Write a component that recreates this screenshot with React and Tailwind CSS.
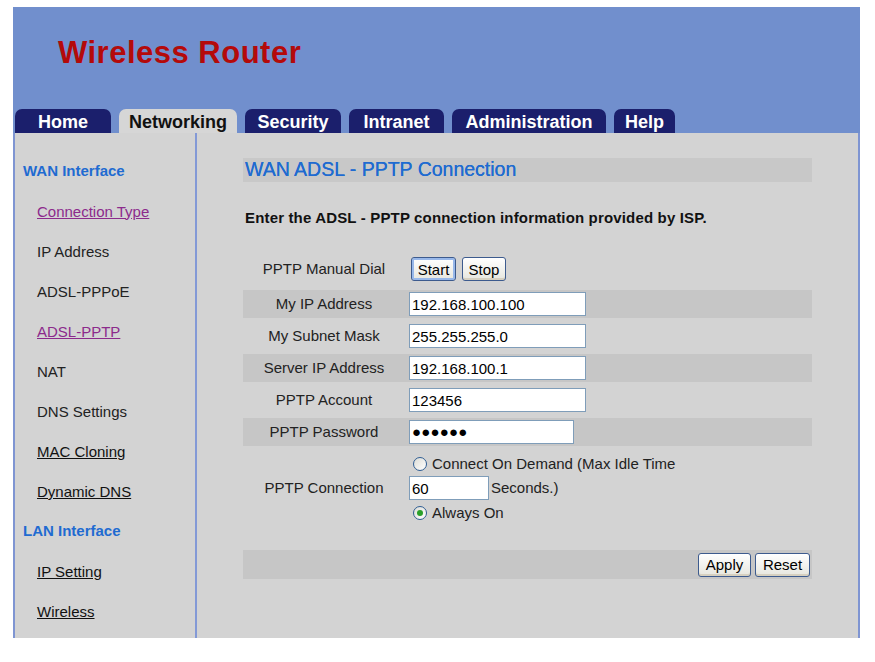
import React from 'react';

const tabs = [
  { label: 'Home', w: 'w-[96px]' },
  { label: 'Networking', w: 'w-[118px]', active: true },
  { label: 'Security', w: 'w-[96px]' },
  { label: 'Intranet', w: 'w-[95px]' },
  { label: 'Administration', w: 'w-[154px]' },
  { label: 'Help', w: 'w-[61px]' },
];

const menu = [
  { label: 'WAN Interface', kind: 'heading' },
  { label: 'Connection Type', kind: 'visited' },
  { label: 'IP Address', kind: 'plain' },
  { label: 'ADSL-PPPoE', kind: 'plain' },
  { label: 'ADSL-PPTP', kind: 'visited' },
  { label: 'NAT', kind: 'plain' },
  { label: 'DNS Settings', kind: 'plain' },
  { label: 'MAC Cloning', kind: 'link' },
  { label: 'Dynamic DNS', kind: 'link' },
  { label: 'LAN Interface', kind: 'heading' },
  { label: 'IP Setting', kind: 'link' },
  { label: 'Wireless', kind: 'link' },
];

function MenuItem({ item }) {
  if (item.kind === 'heading') {
    return <div className="h-[40px] flex items-center pl-[8px] pt-[1px] text-[15px] font-bold text-[#1f6bd1]">{item.label}</div>;
  }
  let cls = 'text-[#222]';
  if (item.kind === 'visited') cls = 'text-[#8c2a8c] underline';
  if (item.kind === 'link') cls = 'text-[#111] underline';
  return (
    <div className="h-[40px] flex items-center pl-[22px] pt-[2px] text-[15px]">
      <a href="#" className={cls}>{item.label}</a>
    </div>
  );
}

function XpButton({ children, focused, w }) {
  return (
    <button
      type="button"
      className={`h-[24px] ${w} rounded-[3px] border border-[#3d5b8e] bg-gradient-to-b from-white to-[#e6e6de] text-[15px] leading-none text-black ${
        focused ? 'shadow-[inset_0_0_0_2px_#98b8ea]' : 'shadow-[inset_0_-2px_0_#d6d0c0]'
      }`}
    >
      {children}
    </button>
  );
}

function Row({ label, dark, children }) {
  return (
    <div className={`flex h-[28px] items-center ${dark ? 'bg-[#c6c6c6]' : ''}`}>
      <div className="w-[162px] text-center text-[15px] text-[#222]">{label}</div>
      <div className="flex flex-1 items-center pl-[4px]">{children}</div>
    </div>
  );
}

function TextBox({ value, w }) {
  return (
    <input
      readOnly
      defaultValue={value}
      className={`h-[24px] ${w} border border-[#7f9db9] bg-white px-[2px] text-[15px] text-black outline-none`}
    />
  );
}

function Radio({ checked }) {
  return (
    <span className="flex h-[14px] w-[14px] items-center justify-center rounded-full border border-[#2f5e93] bg-gradient-to-br from-[#dcdcd6] to-white">
      {checked && <span className="h-[6px] w-[6px] rounded-full bg-[#2aa02a]" />}
    </span>
  );
}

export default function App() {
  return (
    <div className="min-h-screen bg-white pl-[13px] pt-[7px] font-['Liberation_Sans',Arial,sans-serif]">
      <div className="w-[847px]">
        {/* header */}
        <div className="flex h-[126px] flex-col bg-[#718fcd]">
          <h1 className="pl-[45px] pt-[30px] text-[31px] font-bold leading-none tracking-[0.5px] text-[#b40a0a]">Wireless Router</h1>
          <div className="mt-auto flex gap-[8px] pl-[2px]">
            {tabs.map((t) => (
              <div
                key={t.label}
                className={`flex h-[24px] ${t.w} items-center justify-center rounded-t-[7px] pt-[2px] text-[18px] font-bold leading-none ${
                  t.active ? 'bg-[#d6d6d6] text-[#111]' : 'bg-[#1b1f6c] text-white'
                }`}
              >
                {t.label}
              </div>
            ))}
          </div>
        </div>

        {/* body */}
        <div className="flex h-[505px] border-x-2 border-[#7f95d2] bg-[#d3d3d3]">
          <div className="w-[182px] border-r-2 border-[#8399d6] pt-[18px]">
            {menu.map((m) => (
              <MenuItem key={m.label} item={m} />
            ))}
          </div>

          <div className="pl-[46px] pt-[25px]">
            <div className="w-[569px]">
              <div className="flex h-[24px] items-center bg-[#c8c8c8] pl-[2px] text-[19.5px] leading-none text-[#1f6bd1] [text-shadow:0_0_0.5px_#1f6bd1]">
                WAN ADSL - PPTP Connection
              </div>

              <p className="mt-[26px] pl-[2px] text-[15px] font-bold leading-[20px] tracking-[0.16px] text-[#111]">
                Enter the ADSL - PPTP connection information provided by ISP.
              </p>

              <div className="mt-[27px]">
                <Row label="PPTP Manual Dial">
                  <div className="flex gap-[6px] pl-[2px]">
                    <XpButton focused w="w-[45px]">Start</XpButton>
                    <XpButton w="w-[44px]">Stop</XpButton>
                  </div>
                </Row>
              </div>

              <div className="mt-[7px] flex flex-col gap-[4px]">
                <Row label="My IP Address" dark>
                  <TextBox value="192.168.100.100" w="w-[177px]" />
                </Row>
                <Row label="My Subnet Mask">
                  <TextBox value="255.255.255.0" w="w-[177px]" />
                </Row>
                <Row label="Server IP Address" dark>
                  <TextBox value="192.168.100.1" w="w-[177px]" />
                </Row>
                <Row label="PPTP Account">
                  <TextBox value="123456" w="w-[177px]" />
                </Row>
                <Row label="PPTP Password" dark>
                  <div className="flex h-[24px] w-[165px] items-center border border-[#7f9db9] bg-white pl-[2px] text-[15px] tracking-[0.2px] text-black">
                    ●●●●●●
                  </div>
                </Row>

                <div className="flex items-center pt-[2px]">
                  <div className="w-[162px] text-center text-[15px] text-[#222]">PPTP Connection</div>
                  <div className="flex flex-col pl-[4px] text-[15px] text-[#222]">
                    <label className="flex h-[24px] items-center gap-[5px] pl-[4px]">
                      <Radio />
                      Connect On Demand (Max Idle Time
                    </label>
                    <div className="flex items-center gap-[2px]">
                      <TextBox value="60" w="w-[80px]" />
                      <span>Seconds.)</span>
                    </div>
                    <label className="mt-[1px] flex h-[24px] items-center gap-[5px] pl-[4px]">
                      <Radio checked />
                      Always On
                    </label>
                  </div>
                </div>
              </div>

              <div className="mt-[25px] flex h-[29px] items-center justify-end gap-[4px] bg-[#c6c6c6] pr-[2px]">
                <XpButton w="w-[53px]">Apply</XpButton>
                <XpButton w="w-[55px]">Reset</XpButton>
              </div>
            </div>
          </div>
        </div>
      </div>
    </div>
  );
}
